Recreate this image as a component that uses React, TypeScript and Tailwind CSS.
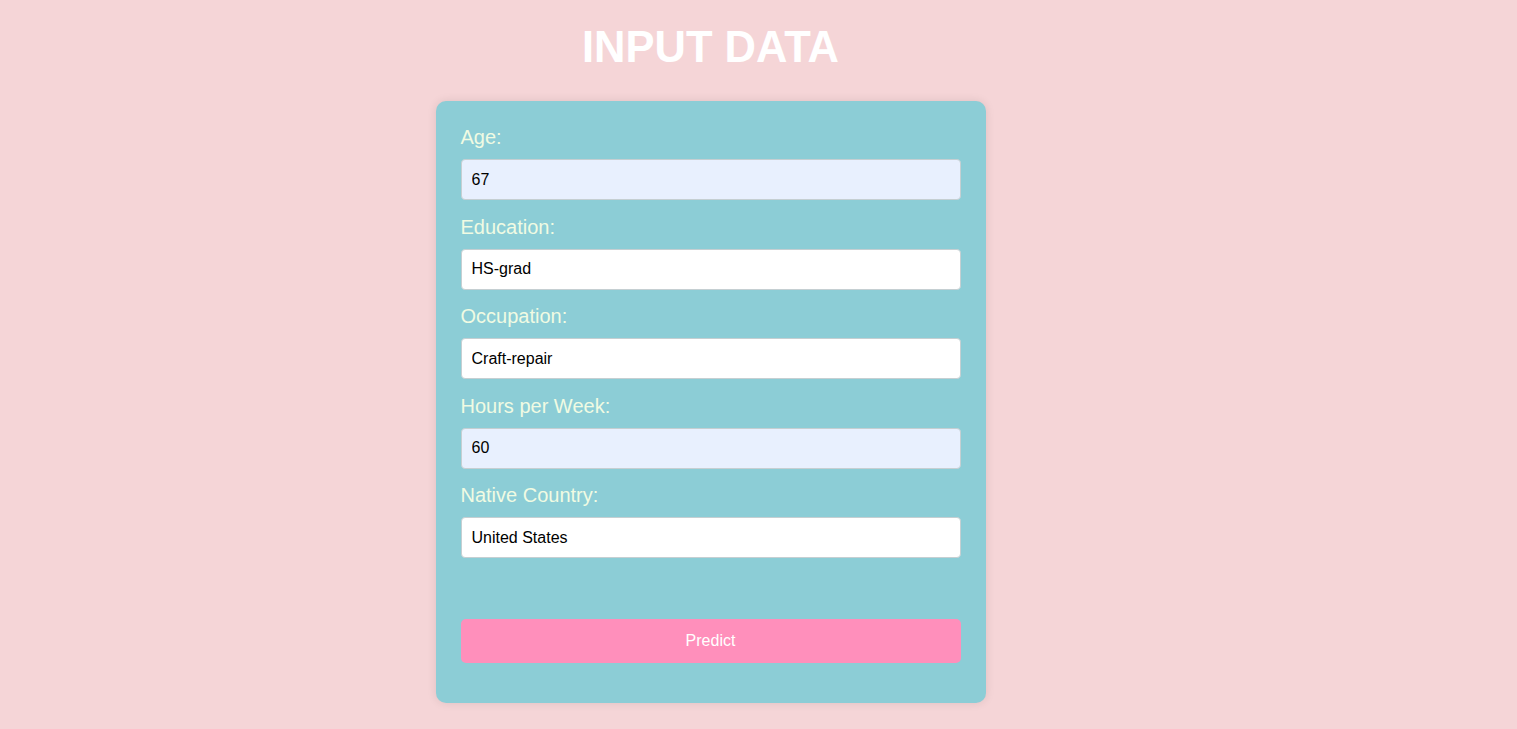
const fields = [
  { label: "Age:", value: "67", filled: true },
  { label: "Education:", value: "HS-grad", filled: false },
  { label: "Occupation:", value: "Craft-repair", filled: false },
  { label: "Hours per Week:", value: "60", filled: true },
  { label: "Native Country:", value: "United States", filled: false },
];

export default function App() {
  return (
    <div className="min-h-[729px] bg-[#f5d5d7] font-['Liberation_Sans',Arial,sans-serif]">
      <div className="flex w-[1421px] flex-col items-center">
        <h1 className="mt-[23px] text-[43.5px] leading-[48px] font-bold text-white">INPUT DATA</h1>

        <form
          className="mt-[30px] w-[550px] rounded-[10px] bg-[#8ccdd6] px-[25px] pt-[25px] pb-[40px] shadow-[0_0_10px_rgba(0,0,0,0.1)]"
          onSubmit={(e) => e.preventDefault()}
        >
          {fields.map((f) => (
            <div key={f.label} className="mb-[15.5px]">
              <label className="mb-[10px] block text-[20px] leading-[23px] text-[#f0fbe3]">{f.label}</label>
              <input
                type="text"
                defaultValue={f.value}
                className={`block h-[41px] w-full rounded-[4px] border border-[#c5cfd2] px-[10px] text-[16px] text-black outline-none ${
                  f.filled ? "bg-[#e8f0fe]" : "bg-white"
                }`}
              />
            </div>
          ))}

          <button
            type="submit"
            className="mt-[61px] block h-[44px] w-full rounded-[5px] bg-[#ff8fbb] text-[16px] text-white"
          >
            Predict
          </button>
        </form>
      </div>
    </div>
  );
}
